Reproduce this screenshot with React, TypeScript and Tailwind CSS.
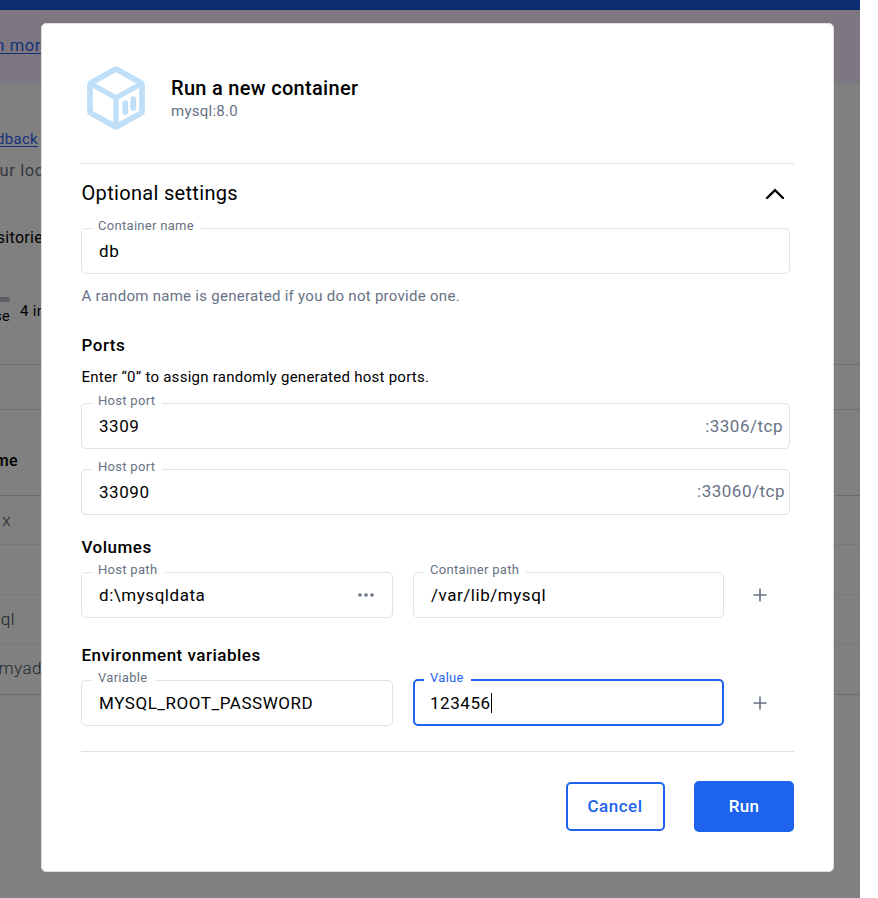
import type { ReactNode } from "react";

type FieldProps = {
  label: string;
  value: string;
  labelWidth: string;
  className?: string;
  focused?: boolean;
  children?: ReactNode;
};

function Field({ label, value, labelWidth, className = "", focused = false, children }: FieldProps) {
  return (
    <div
      className={`relative flex items-center justify-between rounded-[5px] ${
        focused ? "-mt-px h-[47px] border-2 border-[#1d63ed] pl-[15px]" : "h-[46px] border border-[#e1e2e6] pl-[17px]"
      } ${className}`}
    >
      <span
        className={`absolute -top-[11px] h-4 bg-white pl-[6px] text-[13px] leading-4 tracking-[0.3px] whitespace-nowrap ${labelWidth} ${
          focused ? "left-[9px] text-[#1d63ed]" : "left-[10px] text-[#677285]"
        }`}
      >
        {label}
      </span>
      <span
        className={`flex items-center text-[17px] leading-5 tracking-[0.54px] text-black ${focused ? "pt-px" : "pb-px"}`}
      >
        {value}
        {focused && <span className="h-5 w-px bg-black" />}
      </span>
      {children}
    </div>
  );
}

function PlusIcon() {
  return (
    <svg className="ml-[29px] size-[14px]" viewBox="0 0 14 14" fill="none" stroke="#677285" strokeWidth="1.6">
      <path d="M7 .5v13M.5 7h13" />
    </svg>
  );
}

function CubeIcon() {
  return (
    <svg
      className="h-[64px] w-[60px]"
      viewBox="0 0 60 64"
      fill="none"
      stroke="#bfdff9"
      strokeWidth="5.8"
      strokeLinejoin="round"
      strokeLinecap="round"
    >
      <path d="M28.6 3.700Q30 3 31.400 3.700L54.800 16.700Q56.100 17.500 56.100 19V45Q56.100 46.500 54.800 47.300L31.400 60.300Q30 61 28.600 60.300L5.200 47.300Q3.900 46.500 3.900 45V19Q3.900 17.500 5.200 16.700Z" />
      <path d="M4.500 17.700L30 31.700L55.500 17.700M30 31.700V60" strokeWidth="5.3" />
      <path d="M39.300 37.200V46M47.300 33.200V41.900" />
    </svg>
  );
}

function Page() {
  return (
    <div className="flex h-[898px] w-[860px] flex-col overflow-hidden bg-[#808080] whitespace-nowrap">
      <div className="h-[10px] bg-[#0b2c70]" />
      <div className="h-[73px] bg-[#7e7681] pt-[26px]">
        <span className="flex w-[41px] justify-end text-[16.5px] leading-5 tracking-[0.6px] text-[#103278] underline underline-offset-2">
          n mor
        </span>
      </div>
      <div className="mt-[46px] flex h-5 w-[38px] justify-end text-[15px] leading-5 tracking-[0.3px] text-[#17327c] underline underline-offset-2">
        dback
      </div>
      <div className="mt-[12px] flex h-5 w-[44px] justify-end text-[16.500px] leading-5 tracking-[0.6px] text-[#34393f]">
        ur loc
      </div>
      <div className="mt-[47px] flex h-5 w-[43px] justify-end text-[16px] leading-5 tracking-[0.3px] text-black">
        sitorie
      </div>
      <div className="mt-[49px] flex h-[27px]">
        <div className="flex w-[10px] shrink-0 flex-col items-end">
          <div className="h-[5px] w-[10px] shrink-0 rounded-r-full bg-[#5c5f65]" />
          <span className="text-[14.5px] leading-[29px] tracking-[0.3px]">se</span>
        </div>
        <span className="pt-[4px] pl-[10px] text-[15px] leading-5 tracking-[0.3px]">4 in</span>
      </div>
      <div className="mt-[40px] h-[46px] border-y border-[#6f7072]" />
      <div className="flex h-[86px] items-center border-b border-[#6b6c6e]">
        <span className="flex w-[18px] justify-end pt-4 text-[16px] font-medium tracking-[0.4px]">me</span>
      </div>
      <div className="flex h-[49px] items-center border-b border-[#787878]">
        <span className="flex w-[11px] justify-end pt-px text-[17px] font-light tracking-[0.5px] text-[#22262b]">x</span>
      </div>
      <div className="h-[50px] border-b border-[#787878]" />
      <div className="flex h-[50px] items-center border-b border-[#787878]">
        <span className="flex w-[15px] justify-end text-[17px] font-light tracking-[0.5px] text-[#22262b]">ql</span>
      </div>
      <div className="flex h-[50px] items-center border-b border-[#6b6c6e]">
        <span className="flex w-[42px] justify-end pb-[2px] text-[17px] font-light tracking-[0.5px] text-[#22262b]">
          myad
        </span>
      </div>
    </div>
  );
}

function Dialog() {
  return (
    <div className="absolute top-[23px] left-[41px] flex h-[849px] w-[793px] flex-col rounded-[5px] border border-[#dedee1] bg-white px-[39px] whitespace-nowrap">
      <div className="flex h-[140px] items-center border-b border-[#dfe0e3] pb-[1px] pl-[5px]">
        <div className="pt-[10px]">
          <CubeIcon />
        </div>
        <div className="flex flex-col pt-[12px] pl-[25px]">
          <span className="text-[20px] leading-6 font-medium tracking-[0.3px]">Run a new container</span>
          <span className="text-[15px] leading-[22px] tracking-[0.25px] text-[#677285]">mysql:8.0</span>
        </div>
      </div>

      <div className="flex h-[64px] items-center justify-between pr-[10px] pb-[6px]">
        <span className="pl-[0.5px] text-[20px] leading-6 tracking-[0.32px]">Optional settings</span>
        <svg
          className="mt-[2px] h-[12px] w-[19px]"
          viewBox="0 0 19 12"
          fill="none"
          stroke="#000"
          strokeWidth="2.4"
          strokeLinecap="round"
        >
          <path d="M2 10L10 2.200L18 10" />
        </svg>
      </div>

      <Field label="Container name" value="db" labelWidth="w-[109px]" className="w-[709px]" />
      <span className="mt-[12px] pl-[0.5px] text-[15px] leading-5 tracking-[0.28px] text-[#677285]">
        A random name is generated if you do not provide one.
      </span>

      <span className="mt-[29px] pl-[0.5px] text-[17px] leading-5 font-medium tracking-[0.5px]">Ports</span>
      <span className="mt-[12px] mb-[16px] pl-[0.5px] text-[15px] leading-5 tracking-[0.26px]">
        Enter “0” to assign randomly generated host ports.
      </span>
      <Field label="Host port" value="3309" labelWidth="w-[70px]" className="w-[709px] pr-[6px]">
        <span className="pb-px text-[17px] leading-5 tracking-[0.5px] text-[#677285]">:3306/tcp</span>
      </Field>
      <Field label="Host port" value="33090" labelWidth="w-[70px]" className="mt-[20px] w-[709px] pr-[4px]">
        <span className="pb-[3px] text-[17px] leading-5 tracking-[0.5px] text-[#677285]">:33060/tcp</span>
      </Field>

      <span className="mt-[22px] mb-[15px] pl-[0.5px] text-[17px] leading-5 font-medium tracking-[0.5px]">Volumes</span>
      <div className="flex items-center">
        <Field label="Host path" value="d:\mysqldata" labelWidth="w-[73px]" className="w-[312px] pr-[18px]">
          <svg className="h-[4px] w-[16px]" viewBox="0 0 16 4" fill="#677285">
            <circle cx="2" cy="2" r="1.800" />
            <circle cx="8" cy="2" r="1.800" />
            <circle cx="14" cy="2" r="1.800" />
          </svg>
        </Field>
        <Field label="Container path" value="/var/lib/mysql" labelWidth="w-[102px]" className="ml-[20px] w-[311px]" />
        <PlusIcon />
      </div>

      <span className="mt-[27px] mb-[15px] pl-[0.5px] text-[17px] leading-5 font-medium tracking-[0.5px]">
        Environment variables
      </span>
      <div className="flex h-[46px] items-center">
        <Field label="Variable" value="MYSQL_ROOT_PASSWORD" labelWidth="w-[63px]" className="w-[312px]" />
        <Field label="Value" value="123456" labelWidth="w-[47px]" className="ml-[20px] w-[311px]" focused />
        <PlusIcon />
      </div>

      <div className="mt-[25px] flex h-[81px] items-end justify-end gap-[29px] border-t border-[#dfe0e3]">
        <button className="mb-px h-[49px] w-[99px] rounded-[5px] border-2 border-[#1d63ed] pt-px pr-px text-[17px] font-medium tracking-[0.5px] text-[#1d63ed]">
          Cancel
        </button>
        <button className="h-[51px] w-[100px] rounded-[5px] bg-[#1d63ed] pt-px text-[17px] font-medium tracking-[0.3px] text-white">
          Run
        </button>
      </div>
    </div>
  );
}

export default function App() {
  return (
    <div className="relative h-[898px] w-[878px] overflow-hidden bg-white font-['Roboto',sans-serif] text-black">
      <Page />
      <Dialog />
    </div>
  );
}
